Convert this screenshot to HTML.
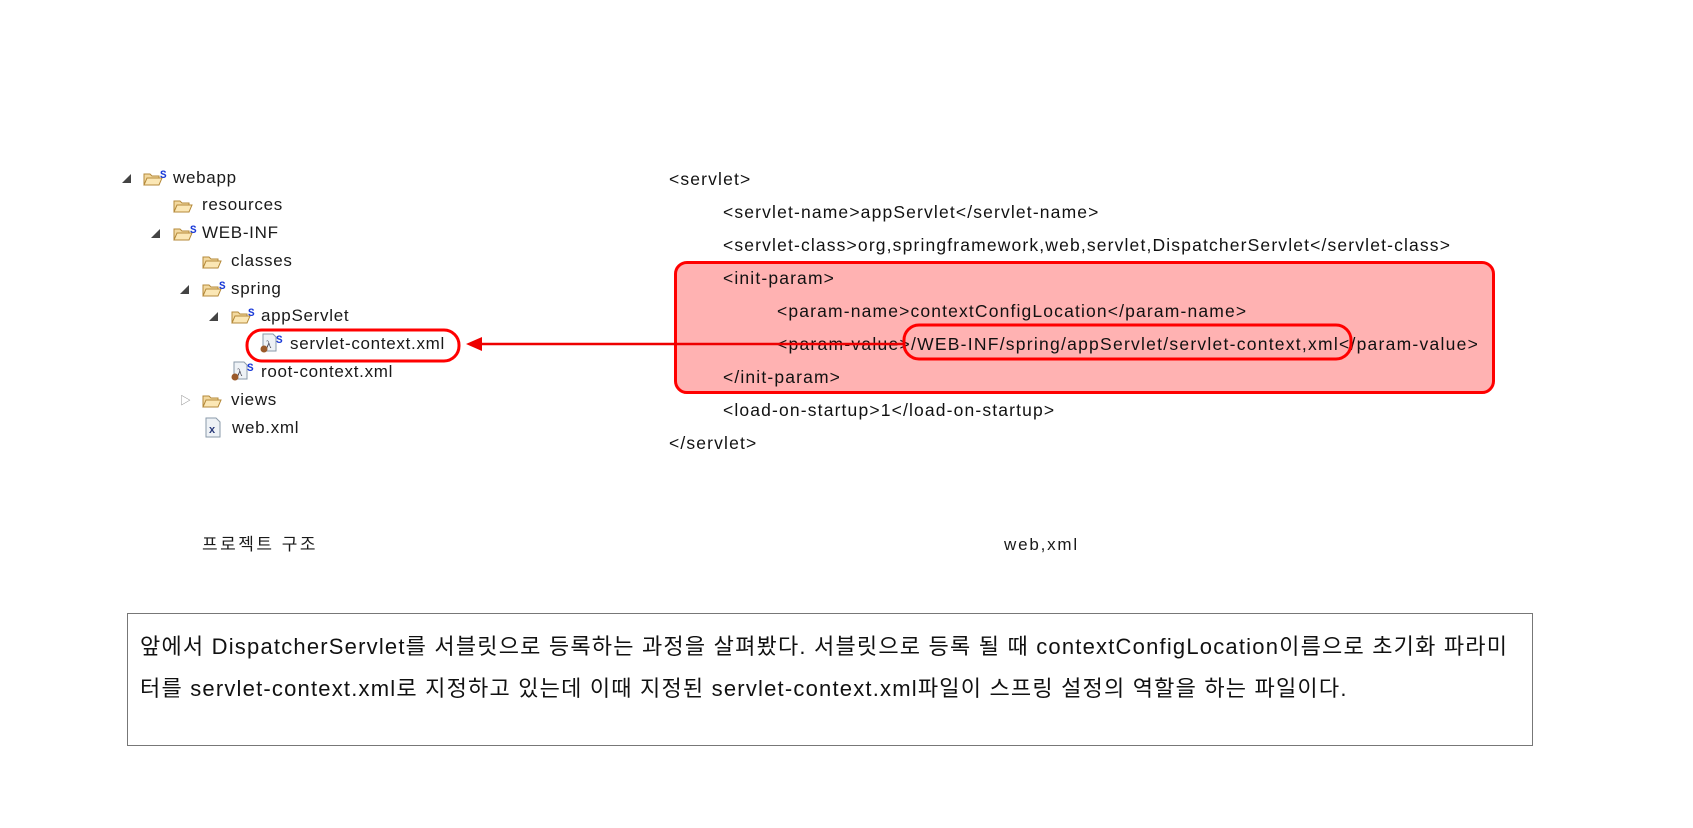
<!DOCTYPE html>
<html><head><meta charset="utf-8"><style>
body{margin:0;width:1693px;height:828px;background:#fff;position:relative;overflow:hidden;font-family:"Liberation Sans","Noto Sans CJK KR",sans-serif;color:#111}
.t{position:absolute;font-size:17px;line-height:20px;white-space:nowrap;color:#1a1a1a;letter-spacing:0.7px}
.ic{position:absolute}
.c{position:absolute;font-size:17.5px;line-height:20px;white-space:nowrap;color:#111;letter-spacing:1.15px}
.tri{position:absolute;font-size:9px;color:#444}
</style></head><body>
<svg width="0" height="0" style="position:absolute"><defs>
<g id="fold"><path d="M1 3h6l2 2h7v3H4L1 14z" fill="#f3d9a0" stroke="#b58a3a"/><path d="M1 14l3-7h15l-3 7z" fill="#fbe7b5" stroke="#b58a3a"/></g>
<g id="xmlc"><path d="M3 1h10l3 3v14H3z" fill="#eef2f6" stroke="#8a9aaa"/><text x="6" y="15" font-size="11" font-family="Liberation Serif" fill="#334">λ</text><circle cx="4" cy="16" r="3.5" fill="#9a5a2a"/></g>
</defs></svg>

<!-- tree -->
<div class="tri" style="left:122px;top:172px">◢</div>
<svg class="ic" style="left:143px;top:168px" width="26" height="20"><use href="#fold" y="3"/><text x="17" y="10" font-size="11" font-weight="bold" fill="#1a3ad8" font-family="Liberation Mono">S</text></svg>
<div class="t" style="left:173px;top:168px">webapp</div>

<svg class="ic" style="left:173px;top:195px" width="26" height="20"><use href="#fold" y="3"/></svg>
<div class="t" style="left:202px;top:195px">resources</div>

<div class="tri" style="left:151px;top:227px">◢</div>
<svg class="ic" style="left:173px;top:223px" width="26" height="20"><use href="#fold" y="3"/><text x="17" y="10" font-size="11" font-weight="bold" fill="#1a3ad8" font-family="Liberation Mono">S</text></svg>
<div class="t" style="left:202px;top:223px">WEB-INF</div>

<svg class="ic" style="left:202px;top:251px" width="26" height="20"><use href="#fold" y="3"/></svg>
<div class="t" style="left:231px;top:251px">classes</div>

<div class="tri" style="left:180px;top:283px">◢</div>
<svg class="ic" style="left:202px;top:279px" width="26" height="20"><use href="#fold" y="3"/><text x="17" y="10" font-size="11" font-weight="bold" fill="#1a3ad8" font-family="Liberation Mono">S</text></svg>
<div class="t" style="left:231px;top:279px">spring</div>

<div class="tri" style="left:209px;top:310px">◢</div>
<svg class="ic" style="left:231px;top:306px" width="26" height="20"><use href="#fold" y="3"/><text x="17" y="10" font-size="11" font-weight="bold" fill="#1a3ad8" font-family="Liberation Mono">S</text></svg>
<div class="t" style="left:261px;top:306px">appServlet</div>

<svg class="ic" style="left:260px;top:333px" width="26" height="22"><use href="#xmlc"/><text x="16" y="10" font-size="11" font-weight="bold" fill="#1a3ad8" font-family="Liberation Mono">S</text></svg>
<div class="t" style="left:290px;top:334px">servlet-context.xml</div>

<svg class="ic" style="left:231px;top:361px" width="26" height="22"><use href="#xmlc"/><text x="16" y="10" font-size="11" font-weight="bold" fill="#1a3ad8" font-family="Liberation Mono">S</text></svg>
<div class="t" style="left:261px;top:362px">root-context.xml</div>

<div class="t" style="left:180px;top:391px;font-size:11px;color:#888">▷</div>
<svg class="ic" style="left:202px;top:390px" width="26" height="20"><use href="#fold" y="3"/></svg>
<div class="t" style="left:231px;top:390px">views</div>

<svg class="ic" style="left:204px;top:417px" width="20" height="22"><path d="M2 1h10l4 4v15H2z" fill="#eef2f6" stroke="#8a9aaa"/><text x="5" y="16" font-size="11" font-weight="bold" fill="#2a3a7a" font-family="Liberation Sans">x</text></svg>
<div class="t" style="left:232px;top:418px">web.xml</div>

<!-- code -->
<div style="position:absolute;left:674px;top:261px;width:815px;height:127px;background:#ffb2b2;border:3px solid #f00;border-radius:13px"></div>
<div class="c" style="left:669px;top:169px">&lt;servlet&gt;</div>
<div class="c" style="left:723px;top:202px">&lt;servlet-name&gt;appServlet&lt;/servlet-name&gt;</div>
<div class="c" style="left:723px;top:235px">&lt;servlet-class&gt;org,springframework,web,servlet,DispatcherServlet&lt;/servlet-class&gt;</div>
<div class="c" style="left:723px;top:268px">&lt;init-param&gt;</div>
<div class="c" style="left:777px;top:301px">&lt;param-name&gt;contextConfigLocation&lt;/param-name&gt;</div>
<div class="c" style="left:777px;top:334px;letter-spacing:1.25px">&lt;param-value&gt;/WEB-INF/spring/appServlet/servlet-context,xml&lt;/param-value&gt;</div>
<div class="c" style="left:723px;top:367px">&lt;/init-param&gt;</div>
<div class="c" style="left:723px;top:400px">&lt;load-on-startup&gt;1&lt;/load-on-startup&gt;</div>
<div class="c" style="left:669px;top:433px">&lt;/servlet&gt;</div>

<svg class="ic" style="left:0;top:0" width="1693" height="828">
<rect x="247" y="330" width="212" height="31" rx="15" fill="none" stroke="#f00" stroke-width="3"/>
<rect x="904" y="325" width="447" height="34" rx="15" fill="none" stroke="#f00" stroke-width="3"/>
<line x1="905" y1="344" x2="478" y2="344" stroke="#e00" stroke-width="2.5"/>
<path d="M466 344l16-7v14z" fill="#e00"/>
</svg>

<div class="t" style="left:202px;top:535px;font-size:17px;letter-spacing:2.5px">프로젝트 구조</div>
<div class="t" style="left:1004px;top:535px;font-size:17px;letter-spacing:1.8px">web,xml</div>

<div style="position:absolute;left:127px;top:613px;width:1404px;height:131px;border:1px solid #777"></div>
<div style="position:absolute;left:140px;top:626px;font-size:22px;line-height:42px;color:#111;white-space:nowrap;letter-spacing:1.2px">앞에서 DispatcherServlet를 서블릿으로 등록하는 과정을 살펴봤다. 서블릿으로 등록 될 때 contextConfigLocation이름으로 초기화 파라미<br>터를 servlet-context.xml로 지정하고 있는데 이때 지정된 servlet-context.xml파일이 스프링 설정의 역할을 하는 파일이다.</div>
</body></html>
